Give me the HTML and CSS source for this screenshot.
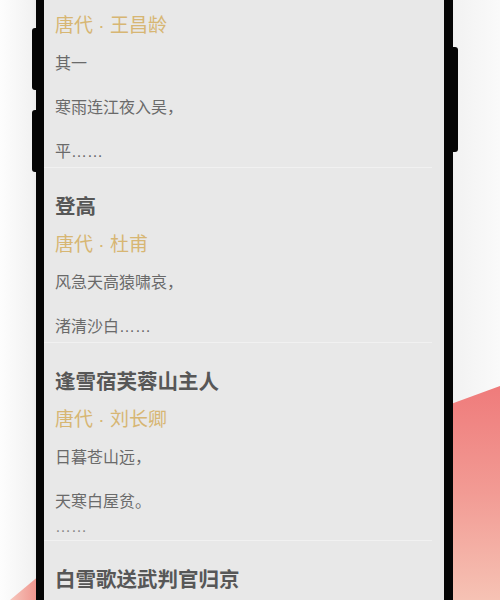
FILE: index.html
```html
<!DOCTYPE html>
<html lang="zh-CN">
<head>
<meta charset="utf-8">
<title>诗词</title>
<link rel="stylesheet" href="styles.css">
</head>
<body>
<div class="stage">
  <svg class="backdrop" width="500" height="600" viewBox="0 0 500 600" aria-hidden="true">
    <defs>
      <linearGradient id="pinkR" x1="0" y1="0" x2="0" y2="1">
        <stop offset="0" stop-color="#ef7b7b"/>
        <stop offset="0.5" stop-color="#f29b94"/>
        <stop offset="1" stop-color="#f6c2b4"/>
      </linearGradient>
      <linearGradient id="pinkL" x1="0" y1="0" x2="1" y2="0">
        <stop offset="0" stop-color="#f6c6bc"/>
        <stop offset="1" stop-color="#ef8f88"/>
      </linearGradient>
    </defs>
    <polygon points="440,408 500,386 500,600 440,600" fill="url(#pinkR)"/>
    <polygon points="10,600 40,575 40,600" fill="url(#pinkL)"/>
  </svg>
  <div class="phone">
    <div class="screen">
      <div class="list">
        <article class="poem first">
          <div class="meta">唐代 · 王昌龄</div>
          <div class="body">
            <p>其一</p>
            <p>寒雨连江夜入吴，</p>
            <p>平……</p>
          </div>
        </article>
        <article class="poem">
          <h2 class="title">登高</h2>
          <div class="meta">唐代 · 杜甫</div>
          <div class="body">
            <p>风急天高猿啸哀，</p>
            <p>渚清沙白……</p>
          </div>
        </article>
        <article class="poem">
          <h2 class="title">逢雪宿芙蓉山主人</h2>
          <div class="meta">唐代 · 刘长卿</div>
          <div class="body">
            <p>日暮苍山远，</p>
            <p>天寒白屋贫。</p>
            <p class="more">……</p>
          </div>
        </article>
        <article class="poem">
          <h2 class="title">白雪歌送武判官归京</h2>
        </article>
      </div>
    </div>
  </div>
</div>
</body>
</html>
```

FILE: styles.css
```css
html, body {
  margin: 0;
  padding: 0;
}

body {
  width: 500px;
  height: 600px;
  overflow: hidden;
  background: #ffffff;
  font-family: "Liberation Sans", "Noto Sans CJK SC", sans-serif;
}

.stage {
  position: relative;
  width: 500px;
  height: 600px;
  background: linear-gradient(90deg, #fdfdfd 0%, #f2f2f2 6.4%, #ececec 7.2%, #ececec 90%, #f2f2f2 91%, #fafafa 100%);
}

.backdrop {
  position: absolute;
  left: 0;
  top: 0;
}

.phone {
  position: relative;
  margin-left: 36px;
  width: 417px;
  height: 600px;
  box-sizing: border-box;
  padding: 0 9px 0 8px;
  background: #050505;
}

.phone::before,
.phone::after {
  content: "";
  position: absolute;
  background: #050505;
}

/* left volume buttons */
.phone::before {
  left: -4px;
  top: 28px;
  width: 6px;
  height: 62px;
  border-radius: 3px 0 0 3px;
  box-shadow: 0 82px 0 0 #050505;
}

/* right power button */
.phone::after {
  right: -5px;
  top: 47px;
  width: 7px;
  height: 105px;
  border-radius: 0 3px 3px 0;
}

.screen {
  height: 600px;
  overflow: hidden;
  background: #e8e8e8;
  padding-right: 12px;
}

.poem {
  border-top: 1px solid #f1f1f1;
  padding: 20px 0 0 11px;
}

.poem.first {
  border-top: 0;
  padding-top: 7px;
}

.poem.first .body p:last-child {
  margin-bottom: -1px;
}

.title {
  margin: 0;
  font-size: 20.5px;
  line-height: 38px;
  font-weight: 700;
  color: #575757;
  white-space: nowrap;
}

.meta {
  font-size: 19px;
  line-height: 38px;
  color: #d7b673;
}

.body {
  display: flex;
  flex-direction: column;
  gap: 12px;
  padding-top: 3px;
}

.body p {
  margin: 0;
  font-size: 16px;
  line-height: 32px;
  color: #6a6a6a;
}

.poem:nth-child(2) .body p:last-child {
  margin-bottom: -1px;
}

.body p.more {
  line-height: 16px;
  margin-top: -11px;
  margin-bottom: 5px;
  color: #8a8a8a;
}
```
